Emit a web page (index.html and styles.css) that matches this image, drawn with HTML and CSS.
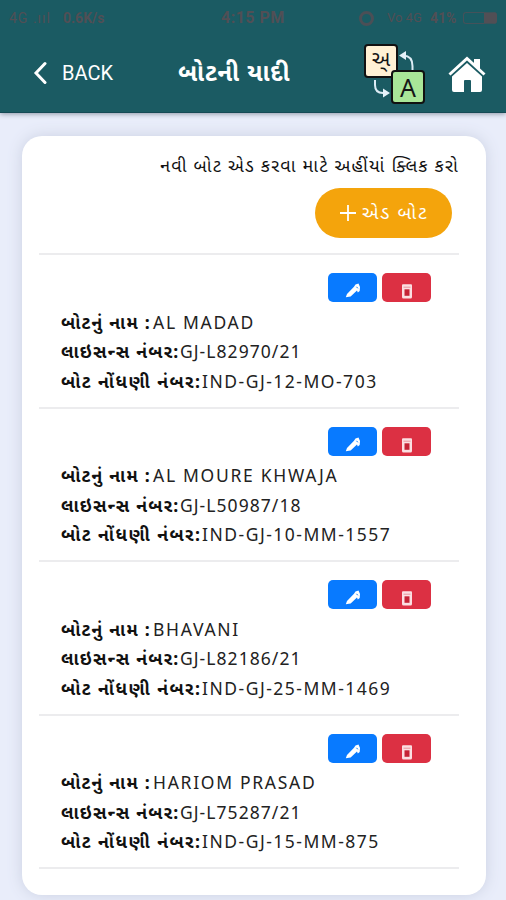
FILE: index.html
```
<!DOCTYPE html>
<html lang="gu">
<head>
<meta charset="utf-8">
<title>બોટની યાદી</title>
<link rel="stylesheet" href="styles.css">
</head>
<body>
<svg width="0" height="0" class="defs">
  <symbol id="pen" viewBox="0 0 16 16"><path d="M.8 14.200 2 11 9 3.800 10.500 1.500l3-1L15 4l-.3 4-1.900 1.500-.8-2L5.600 13.400z" fill="currentColor"/><path d="m11.500 3.800 1.300 1.500" stroke="#0878f8"/></symbol>
  <symbol id="trash" viewBox="0 0 12 16"><path d="M1 2.300q0-1 1-1h8q1 0 1 1V14q0 1.500-1.500 1.500h-7Q1 15.500 1 14z" fill="#fbdfe2"/><path d="M3.500 6.300h5v6.500h-5z" fill="#c52336"/><path d="M2.500 4.200h7" stroke="#e8939c"/></symbol>
</svg>
<header class="header">
  <div class="status"><span class="st-left">4G .ııl</span><span class="st-speed">0.6K/s</span><span class="st-time">4:15 PM</span><span class="st-ring"></span><span class="st-net">Vo 4G</span><span class="st-pct">41%</span><span class="st-batt"></span></div>
  <nav class="nav">
    <svg class="chevron" viewBox="0 0 14 24"><path d="M12 2.5 3 12l9 9.500" fill="none" stroke="#fff" stroke-width="3" stroke-linecap="round"/></svg>
    <span class="back">BACK</span>
    <h1 class="title">બોટની યાદી</h1>
    <div class="lang">
      <span class="tile gu">અ્</span><span class="tile en">A</span>
      <svg class="arrows" viewBox="0 0 60 60"><g fill="none" stroke="#dcecf5" stroke-width="2"><path d="M48.500 27v-5q0-10-9-10.500M11 36v5q0 8 8 8h2"/></g><path d="m35 11.500 7-4.500v9zM26 49l-7-4.500v9z" fill="#e5f2fa"/></svg>
    </div>
    <svg class="home" viewBox="0 0 38 38"><path d="M26 4h6v11l-6-5z" fill="#fff"/><path d="m1.500 19.500 17.500-16 17.500 16" fill="none" stroke="#fff" stroke-width="3"/><path d="m19 8 15 13.500V35q0 2-2 2h-9V26q0-1-1-1h-5q-1 0-1 1v11H6q-2 0-2-2V21.500z" fill="#fff"/></svg>
  </nav>
</header>
<main class="card">
  <p class="hint">નવી બોટ એડ કરવા માટે અહીંયાં ક્લિક કરો</p>
  <button class="add"><svg class="plus" viewBox="0 0 18 18"><path d="M9 1v16M1 9h16" stroke="#fff" stroke-width="1.800"/></svg><span>એડ બોટ</span></button>
  <section class="boat">
    <div class="actions"><span class="btn edit"><svg><use href="#pen"/></svg></span><span class="btn del"><svg><use href="#trash"/></svg></span></div>
    <p class="row"><b class="name">બોટનું નામ :</b><span>AL MADAD</span></p>
    <p class="row"><b class="lic">લાઇસન્સ નંબર:</b><span class="num">GJ-L82970/21</span></p>
    <p class="row"><b class="reg">બોટ નોંધણી નંબર:</b><span class="code">IND-GJ-12-MO-703</span></p>
  </section>
  <section class="boat">
    <div class="actions"><span class="btn edit"><svg><use href="#pen"/></svg></span><span class="btn del"><svg><use href="#trash"/></svg></span></div>
    <p class="row"><b class="name">બોટનું નામ :</b><span>AL MOURE KHWAJA</span></p>
    <p class="row"><b class="lic">લાઇસન્સ નંબર:</b><span class="num">GJ-L50987/18</span></p>
    <p class="row"><b class="reg">બોટ નોંધણી નંબર:</b><span class="code">IND-GJ-10-MM-1557</span></p>
  </section>
  <section class="boat">
    <div class="actions"><span class="btn edit"><svg><use href="#pen"/></svg></span><span class="btn del"><svg><use href="#trash"/></svg></span></div>
    <p class="row"><b class="name">બોટનું નામ :</b><span>BHAVANI</span></p>
    <p class="row"><b class="lic">લાઇસન્સ નંબર:</b><span class="num">GJ-L82186/21</span></p>
    <p class="row"><b class="reg">બોટ નોંધણી નંબર:</b><span class="code">IND-GJ-25-MM-1469</span></p>
  </section>
  <section class="boat">
    <div class="actions"><span class="btn edit"><svg><use href="#pen"/></svg></span><span class="btn del"><svg><use href="#trash"/></svg></span></div>
    <p class="row"><b class="name">બોટનું નામ :</b><span>HARIOM PRASAD</span></p>
    <p class="row"><b class="lic">લાઇસન્સ નંબર:</b><span class="num">GJ-L75287/21</span></p>
    <p class="row"><b class="reg">બોટ નોંધણી નંબર:</b><span class="code">IND-GJ-15-MM-875</span></p>
  </section>
</main>
</body>
</html>
```
FILE: styles.css
```
* { box-sizing: border-box; }
body { margin: 0; height: 900px; overflow: hidden; background: #e9edfa; color: #111; font-family: "Noto Sans", "Noto Sans Gujarati", sans-serif; }
p, h1 { margin: 0; }
.defs { position: absolute; }
.header { height: 113px; background: #1b5b63; border-bottom: 1px solid #154a55; box-shadow: 0 1px 5px #8d96a5; color: #fff; }
.status { height: 36px; padding: 0 9px 0; display: flex; align-items: center; color: #514f55; font: bold 14px/32px Roboto, sans-serif; white-space: nowrap; }
.st-left { width: 54px; font-weight: normal; letter-spacing: 1px; }
.st-speed { width: 158px; font-size: 14px; }
.st-time { width: 138px; font-size: 16px; letter-spacing: .5px; }
.st-ring { width: 15px; height: 15px; border: 3px solid #4b4f56; border-radius: 50%; margin-right: 13px; }
.st-net { width: 43px; font-weight: normal; font-size: 13px; }
.st-pct { width: 33px; }
.st-batt { width: 34px; height: 12px; border: 1px solid #44525a; border-right: 13px solid #514f55; border-radius: 3px; }
.nav { height: 76px; display: flex; align-items: center; padding-left: 33px; }
.chevron { width: 14px; height: 24px; margin-top: -2px; }
.back { margin: -2px 0 0 15px; width: 116px; font: 20px Roboto, sans-serif; }
.title { width: 186px; margin-top: -5px; font-size: 24px; line-height: 36px; letter-spacing: .8px; white-space: nowrap; }
.lang { width: 61px; height: 61px; position: relative; }
.tile { position: absolute; width: 34px; height: 34px; border: 2px solid #111; border-radius: 4px; color: #151515; text-align: center; }
.gu { left: 0; top: 0; background: #fff1d5; font-size: 21px; line-height: 25px; }
.en { left: 27px; top: 26px; background: #a9e698; font-size: 25px; line-height: 30px; z-index: 1; }
.arrows { position: absolute; left: 0; top: 0; width: 60px; height: 60px; }
.home { width: 38px; height: 38px; margin-left: 23px; }
.card { width: 464px; height: 759px; margin: 23px 0 0 22px; padding: 16px 27px 0 17px; border-radius: 20px; background: #fff; box-shadow: 0 0 15px #cbd1e2; display: flex; flex-direction: column; }
.hint { align-self: flex-end; height: 36px; font-size: 18px; line-height: 27px; letter-spacing: 1.2px; white-space: nowrap; }
.add { width: 137px; height: 50px; margin: 0 7px 0 0; padding: 0; align-self: flex-end; border: 0; border-radius: 25px; background: #f4a40c; color: #fff; font: 18.8px "Noto Sans", "Noto Sans Gujarati", sans-serif; letter-spacing: 1.7px; display: flex; align-items: center; justify-content: center; gap: 5px; white-space: nowrap; flex: none; }
.plus { width: 18px; height: 18px; }
.boat { height: 153.5px; border-top: 2px solid #ececee; flex: none; padding: 18px 0 0 22px; }
.boat:first-of-type { margin-top: 15px; }
.boat:last-child { height: 155.5px; border-bottom: 2px solid #ececee; }
.actions { display: flex; justify-content: flex-end; gap: 5px; padding-right: 28px; height: 34.5px; }
.btn { width: 49px; height: 29px; border-radius: 5px; display: flex; align-items: center; justify-content: center; padding-top: 7px; color: #fff; }
.edit { background: #087aff; }
.del { background: #dc3043; }
.btn svg { width: 16px; height: 16px; }
.row { height: 29.5px; display: flex; color: #222; font-size: 17.5px; line-height: 29px; white-space: nowrap; letter-spacing: 1.7px; }
.row .num { letter-spacing: 1.05px; }
.row .code { letter-spacing: 1.5px; }
.row b { color: #111; letter-spacing: 1.2px; font-size: 17.8px; flex: none; }
.name { width: 92px; }
.lic { width: 119px; }
.row .reg { width: 141px; letter-spacing: 1.45px; }
```
